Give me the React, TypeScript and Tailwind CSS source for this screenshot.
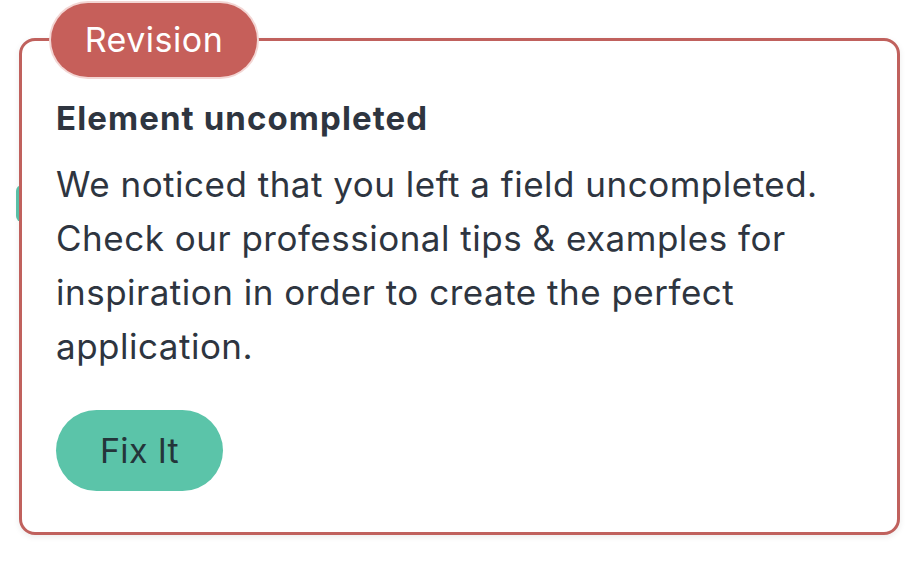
export default function App() {
  return (
    <div className="min-h-screen bg-white pl-[19px] pr-[22px] pt-[38px] font-['Inter',sans-serif] text-[#2e3540]">
      <div className="relative">
        <div className="absolute -left-[3px] top-[147px] h-[37px] w-[6px] rounded-l-full bg-[#5cc4aa]" />
        <div className="relative rounded-[16px] border-[3px] border-[#c0615d] bg-white px-[34px] pb-[41px] pt-[53px] shadow-[0_2px_6px_rgba(0,0,0,0.08)]">
          <div className="absolute -top-[38px] left-[29px] flex h-[74px] w-[206px] items-center justify-center rounded-full bg-[#c65f5a] pb-[2px] text-[34px] tracking-[0.5px] text-white ring-2 ring-[#f3d6d4]">
            Revision
          </div>
          <h2 className="text-[33px] font-bold leading-[48px] tracking-[1.1px]">Element uncompleted</h2>
          <p className="mt-[15px] text-[35px] leading-[54px] tracking-[0.5px] whitespace-nowrap">
            We noticed that you left a field uncompleted.
            <br />
            Check our professional tips &amp; examples for
            <br />
            inspiration in order to create the perfect
            <br />
            application.
          </p>
          <button className="mt-[37px] flex h-[81px] w-[167px] items-center justify-center rounded-full bg-[#5bc4a9] text-[34px] tracking-[0.3px] text-[#24353a]">
            Fix It
          </button>
        </div>
      </div>
    </div>
  );
}
